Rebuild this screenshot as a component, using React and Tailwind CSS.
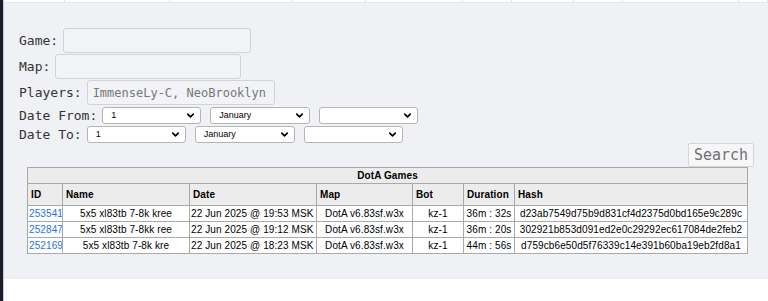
import React from 'react';
import { ChevronDown } from 'lucide-react';

const mono = { fontFamily: '"DejaVu Sans Mono", "Liberation Mono", monospace' };

const topCells = [61, 105, 122, 74, 97, 49, 62, 49, 116, 29];

const games = [
  { id: '253541', name: '5x5 xl83tb 7-8k kree', date: '22 Jun 2025 @ 19:53 MSK', map: 'DotA v6.83sf.w3x', bot: 'kz-1', duration: '36m : 32s', hash: 'd23ab7549d75b9d831cf4d2375d0bd165e9c289c' },
  { id: '252847', name: '5x5 xl83tb 7-8kk ree', date: '22 Jun 2025 @ 19:12 MSK', map: 'DotA v6.83sf.w3x', bot: 'kz-1', duration: '36m : 20s', hash: '302921b853d091ed2e0c29292ec617084de2feb2' },
  { id: '252169', name: '5x5 xl83tb 7-8k kre', date: '22 Jun 2025 @ 18:23 MSK', map: 'DotA v6.83sf.w3x', bot: 'kz-1', duration: '44m : 56s', hash: 'd759cb6e50d5f76339c14e391b60ba19eb2fd8a1' },
];

const Select = ({ value, width }) => (
  <div className={`flex items-center justify-between h-[17px] bg-white border border-[#b5b5b5] rounded-[3px] pl-[8px] pr-[4px] ${width}`}>
    <span className="text-[9px] text-black leading-none" style={{ fontFamily: '"Liberation Sans", Arial, sans-serif' }}>{value}</span>
    <ChevronDown size={11} strokeWidth={3.5} className="text-black" />
  </div>
);

const Field = ({ label, width, placeholder }) => (
  <div className="flex items-center gap-[5px]">
    <span className="text-[13px] text-[#333]" style={mono}>{label}</span>
    <div className={`h-[25px] border border-[#d3d3d6] rounded-[3px] bg-[#f2f3f6] flex items-center px-[5px] ${width}`}>
      {placeholder && <span className="text-[12px] text-[#777] whitespace-nowrap" style={mono}>{placeholder}</span>}
    </div>
  </div>
);

const DateRow = ({ label, day, month }) => (
  <div className="flex items-center gap-[5px]">
    <span className="text-[13px] text-[#333] leading-[17px]" style={mono}>{label}</span>
    <div className="flex gap-[9px]">
      <Select value={day} width="w-[99px]" />
      <Select value={month} width="w-[100px]" />
      <Select value="" width="w-[99px]" />
    </div>
  </div>
);

const App = () => {
  const th = 'border border-[#a9a9a9] text-left font-bold px-[3px] h-[22px] whitespace-nowrap';
  const td = 'border border-[#a9a9a9] h-[16px] leading-[14px] px-[1px] whitespace-nowrap overflow-hidden';

  return (
    <div className="flex min-h-[301px] bg-white">
      <div className="w-[3px] bg-[#1b1d29]" />
      <div className="flex-1 min-w-0 border-l border-[#c8cad0]">
        <div className="flex h-[3px] bg-white border-b border-[#e6e7ea]">
          {topCells.map((w, i) => (
            <div key={i} className="border-r border-[#e1e2e6]" style={{ width: w }} />
          ))}
        </div>
        <div className="bg-[#f0f1f5] pt-[25px] pb-[25px] pl-[15px] pr-[14px]">
          <div className="flex flex-col gap-[1px]">
            <Field label="Game:" width="w-[188px]" />
            <Field label="Map:" width="w-[186px]" />
            <Field label="Players:" width="w-[188px]" placeholder="ImmenseLy-C, NeoBrooklyn" />
          </div>
          <div className="flex flex-col gap-[2px] mt-[2px]">
            <DateRow label="Date From:" day="1" month="January" />
            <DateRow label="Date To:" day="1" month="January" />
          </div>
          <div className="flex justify-end">
            <button className="h-[24px] w-[66px] border border-[#d5d6da] rounded-[2px] bg-[#f6f6f8] text-[15px] text-[#707070]" style={mono}>
              Search
            </button>
          </div>
          <table
            className="ml-[8px] w-[721px] table-fixed border-collapse border border-[#999] text-[10px] tracking-[0.1px] text-black bg-white"
            style={{ fontFamily: '"Liberation Sans", Arial, sans-serif' }}
          >
            <colgroup>
              <col className="w-[35px]" />
              <col className="w-[127px]" />
              <col className="w-[127px]" />
              <col className="w-[96px]" />
              <col className="w-[51px]" />
              <col className="w-[51px]" />
              <col />
            </colgroup>
            <thead>
              <tr>
                <th colSpan={7} className="border border-[#a9a9a9] bg-[#ececec] font-bold h-[16px] leading-[14px]">
                  DotA Games
                </th>
              </tr>
              <tr className="bg-[#ececec]">
                <th className={th}>ID</th>
                <th className={th}>Name</th>
                <th className={th}>Date</th>
                <th className={th}>Map</th>
                <th className={th}>Bot</th>
                <th className={th}>Duration</th>
                <th className={th}>Hash</th>
              </tr>
            </thead>
            <tbody>
              {games.map((g) => (
                <tr key={g.id}>
                  <td className={`${td} text-left px-0`}>
                    <a href="#" className="text-[#1f74e0]">{g.id}</a>
                  </td>
                  <td className={`${td} text-center`}>{g.name}</td>
                  <td className={`${td} text-left`}>{g.date}</td>
                  <td className={`${td} text-center`}>{g.map}</td>
                  <td className={`${td} text-center`}>{g.bot}</td>
                  <td className={`${td} text-center`}>{g.duration}</td>
                  <td className={`${td} text-center`}>{g.hash}</td>
                </tr>
              ))}
            </tbody>
          </table>
        </div>
      </div>
    </div>
  );
};

export default App;
